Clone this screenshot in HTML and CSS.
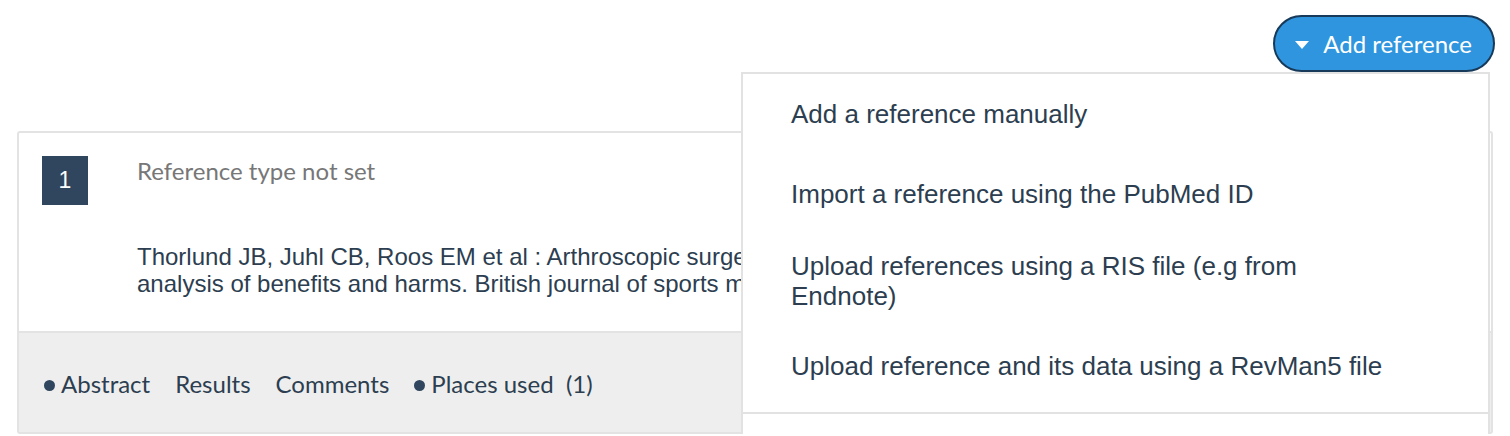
FILE: index.html
```html
<!DOCTYPE html>
<html lang="en">
<head>
    <title>References</title>
    <link rel="stylesheet" href="styles.css">
</head>
<body>
    <div class="toolbar">
        <div class="add-menu">
            <button class="add-btn" type="button"><span class="caret"></span>Add reference</button>
            <ul class="dropdown">
                <li class="first">Add a reference manually</li>
                <li>Import a reference using the PubMed ID</li>
                <li class="wrap">Upload references using a RIS file (e.g from<br>Endnote)</li>
                <li class="last">Upload reference and its data using a RevMan5 file</li>
            </ul>
        </div>
    </div>

    <div class="ref-card">
        <div class="ref-body">
            <div class="ref-num">1</div>
            <div class="ref-main">
                <div class="ref-type">Reference type not set</div>
                <p class="ref-cite">Thorlund JB, Juhl CB, Roos EM et al : Arthroscopic surgery for degenerative knee: systematic review and meta-<br>analysis of benefits and harms. British journal of sports medicine 2015</p>
            </div>
        </div>
        <div class="ref-footer">
            <span class="tab dot">Abstract</span>
            <span class="tab">Results</span>
            <span class="tab">Comments</span>
            <span class="tab dot">Places used&nbsp; (1)</span>
        </div>
    </div>
</body>
</html>
```

FILE: styles.css
```css
body {
    margin: 0;
    font-family: Lato, "Open Sans", sans-serif;
    color: #2c3e50;
    background: #fff;
    overflow: hidden;
}
.toolbar {
    display: flex;
    justify-content: flex-end;
    padding: 15px 15px 0 0;
    height: 116px;
}
.add-menu {
    position: relative;
}
.add-btn {
    display: flex;
    align-items: center;
    height: 57px;
    padding: 0 21px 0 20px;
    background: #2e95de;
    color: #fff;
    border: 2px solid #173a5a;
    border-radius: 29px;
    font-family: Lato, sans-serif;
    font-size: 24px;
    cursor: pointer;
}
.caret {
    width: 0;
    height: 0;
    border-left: 7px solid transparent;
    border-right: 7px solid transparent;
    border-top: 8px solid #fff;
    margin-right: 14px;
    margin-top: 2px;
}
.dropdown {
    position: absolute;
    top: 57px;
    right: 5px;
    width: 745px;
    margin: 0;
    padding: 0 0 30px;
    list-style: none;
    background: #fff;
    border: 2px solid #e2e2e2;
    z-index: 5;
    font-family: "Liberation Sans", Arial, sans-serif;
    font-size: 26px;
    line-height: 30px;
    color: #2c3e50;
}
.dropdown li {
    padding: 21px 48px;
}
.dropdown li.first {
    padding-top: 25px;
    padding-bottom: 29px;
}
.dropdown li.wrap {
    padding-bottom: 19px;
}
.dropdown li.last {
    padding-bottom: 31px;
    border-bottom: 2px solid #e2e2e2;
}
.ref-card {
    margin: 0 17px;
    border: 2px solid #e3e3e3;
    border-radius: 3px;
}
.ref-body {
    display: flex;
    padding: 23px 0 24px 23px;
    height: 151px;
}
.ref-num {
    width: 46px;
    height: 49px;
    background: #2f465e;
    color: #fff;
    font-family: "Liberation Sans", Arial, sans-serif;
    font-size: 23px;
    display: flex;
    align-items: center;
    justify-content: center;
    flex-shrink: 0;
}
.ref-main {
    margin-left: 49px;
}
.ref-type {
    color: #777;
    font-size: 24px;
    line-height: 30px;
}
.ref-cite {
    margin: 57px 0 0;
    font-family: "Liberation Sans", Arial, sans-serif;
    font-size: 24px;
    line-height: 27px;
    white-space: nowrap;
}
.ref-footer {
    background: #eee;
    border-top: 2px solid #e3e3e3;
    height: 101px;
    box-sizing: border-box;
    padding: 1px 0 0 25px;
    display: flex;
    align-items: center;
    gap: 25px;
    font-size: 24px;
}
.tab.dot::before {
    content: "";
    display: inline-block;
    width: 11px;
    height: 11px;
    border-radius: 50%;
    background: #2f465e;
    margin-right: 6px;
    vertical-align: 2px;
}
```
